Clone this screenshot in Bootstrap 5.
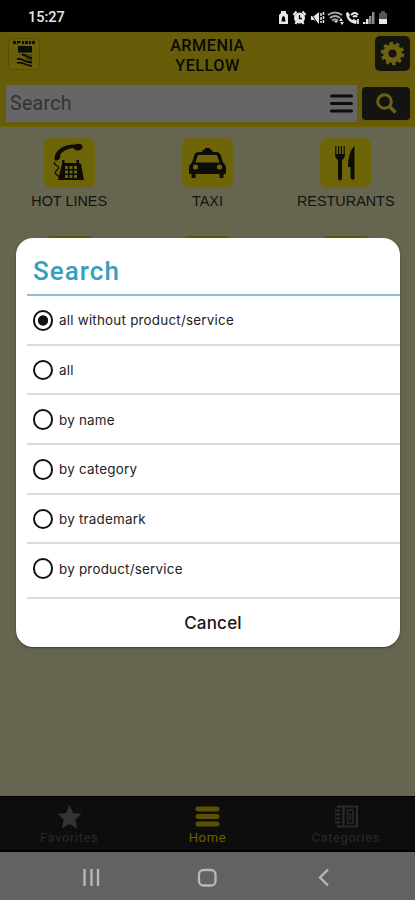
<!DOCTYPE html>
<html lang="en">
<head>
<meta charset="utf-8">
<meta name="viewport" content="width=device-width, initial-scale=1">
<title>Armenia Yellow</title>
<link href="https://cdn.jsdelivr.net/npm/bootstrap@5.3.0/dist/css/bootstrap.min.css" rel="stylesheet">
<style>
body{font-family:Roboto,"Liberation Sans",sans-serif;background:#666650;color:#0c0b04;height:900px;overflow:hidden}
svg{display:block;flex:none}
.screen{width:415px;height:900px}
.status{height:32px;background:#000;color:#e6e6e6;font-size:14.5px;font-weight:500;padding:3px 26px 0 28px}
.top-area{height:95px;background:#665c0a;padding:4px 5px 0 6px;border-bottom:2px solid #6b5f04}
.title-row{height:49px}
.app-title{font-size:16.3px;line-height:20px;font-weight:500;letter-spacing:.45px;color:#0b0a02}
.logo{width:32px;height:32px;border-radius:4px;background:#6a5f09;border:1px solid #574e0b;margin:2px 0 0 2px}
.gear-btn{width:35px;height:35px;border-radius:5px;background:#14140f;margin:0}
.search-field{width:351px;height:37px;background:#666;color:#333;font-size:19.5px;letter-spacing:.3px;padding:0 4px 0 4px}
.find-btn{width:48px;height:33px;border-radius:4px;background:#131311}
.tiles{padding-top:11px;height:109px}
.tile-icon{width:51px;height:50px;border-radius:7px;background:#6e6408}
.tile-label{font-family:"Liberation Sans",sans-serif;font-size:14.4px;line-height:18px;margin-top:4px;color:#13130c}
.cell{width:138.3px}
.peek{height:12px}
.peek span{width:51px;height:12px;border-radius:7px 7px 0 0;background:#5f550a}
.tabs{height:56px;background:#0d0d0d;border-top:1px solid #000;border-bottom:2px solid #000;font-size:13px;letter-spacing:.6px;color:#292929;line-height:16px;padding-top:8px}
.tabs .on{color:#6b6000}
.sysnav{height:48px;background:#626262}
.dialog-box{left:16px;top:238px;width:384px;height:409px;border-radius:17px;background:#fff;padding-left:11px;box-shadow:0 1px 2px #3b3c2b}
.dialog-title{height:58px;font-size:26px;font-weight:500;letter-spacing:1.05px;color:#35a0bd;padding:10px 0 0 6px;border-bottom:2px solid #8cc3d4}
.option{height:49.7px;border-bottom:2px solid #d9dcdc;padding:1px 0 0 5.5px;gap:6px;font-family:Inter,sans-serif;font-size:13.4px;letter-spacing:.23px;color:#222;cursor:pointer}
.option:last-of-type{height:54.5px;padding-bottom:5px}
.option input{appearance:none;width:20.5px;height:20.5px;border:2px solid #111;border-radius:50%;margin:0;flex:none}
.option input:checked{background:radial-gradient(circle,#111 0 4.8px,transparent 5.5px)}
.cancel{height:50px;font-family:Inter,sans-serif;font-size:17px;font-weight:500;color:#171717;width:362px;margin-left:5px;background:none;border:0;letter-spacing:.2px}
</style>
</head>
<body>
<div class="screen d-flex flex-column position-relative">
  <div class="status d-flex align-items-center justify-content-between">
    <span>15:27</span>
    <svg width="112" height="16" viewBox="0 0 112 16" fill="#e6e6e6" stroke="none">
      <path d="M2 5 4 3V1h5v2l2 2v9H2z"/><path d="M4.500 11.500h4l-.6-3.800a1.400 1.400 0 0 0-2.800 0z" fill="#000"/>
      <circle cx="22.500" cy="8" r="5.500"/><path d="m16.500 5 3-3.500M28.500 5l-3-3.500M18.500 14l1-2M26.500 14l-1-2" stroke="#e6e6e6" stroke-width="2"/><path d="M22.500 5v3.500H25" fill="none" stroke="#000" stroke-width="1.300"/>
      <path d="M34 6h3l5-4v12l-5-4h-3z"/><path d="m33 2 8 12" stroke="#000"/><path d="M44 3v10M46.500 2v12" stroke="#e6e6e6" stroke-width="1.500" stroke-dasharray="3 1"/>
      <g fill="none" stroke="#aaa" stroke-width="2"><path d="M51 5q7-5 14 0M53 8q5-4 10 0M55 10.500q3-2 6 0"/></g><path d="m57 11 2 2 2-2zM62 11l2-3 2 3zM63 12h4l-2 3z"/>
      <path d="M69 3c0 6 4 10 10 11l1-3-3-2-2 1-3-3 1-2-2-3z"/><path d="M74 5q4-4 7 0M76 7q2-2 4 0M81 9v5" fill="none" stroke="#e6e6e6" stroke-width="1.800"/>
      <path d="M86 12h2.500v2H86zM89 9h2.500v5H89z"/><path d="M92 6h2.500v8H92zM95 2h2.500v12H95z" fill="#888"/>
      <path d="M102 3h2V1h4v2h2v6h-8z" fill="#555"/><path d="M102 9h8v5h-8z"/>
    </svg>
  </div>

  <header class="top-area">
    <div class="title-row d-flex justify-content-between align-items-start">
      <div class="logo"><svg width="30" height="30" viewBox="0 0 30 30" fill="#0b0b07"><path d="M4 2h3v3H4zM8 2h4l-1 2H9v1H8zM13 2h2v3h-2zM16 2h3v3h-3zM20 2h2v3h-2zM23 2h3v3h-3zM9 7h14v6.500H9z"/><path d="M9 15.500h14v8C16 22 17 16.500 9 15.500z" fill="#4b430a"/><path d="M8 20c6-1 6 3 15 3.500M8 24c5-2 7 2 15 3M13 15.500c5 0 4 3 10 4" fill="none" stroke="#0b0b07" stroke-width="1.800"/></svg></div>
      <div class="app-title text-center">ARMENIA<br>YELLOW</div>
      <button class="gear-btn btn p-0 d-flex align-items-center justify-content-center border-0" aria-label="Settings"><svg width="25" height="25" viewBox="-12.500 -12.500 25 25"><circle r="6.800" fill="none" stroke="#6d6213" stroke-width="5.400"/><circle r="10" fill="none" stroke="#6d6213" stroke-width="3.500" stroke-dasharray="3.400 2.883"/></svg></button>
    </div>
    <div class="d-flex align-items-center justify-content-between">
      <div class="search-field d-flex align-items-center justify-content-between"><span>Search</span><svg width="23" height="20" viewBox="0 0 23 20"><path d="M1.500 2h20M1.500 9.500h20M1.500 17h20" stroke="#0b0b0b" stroke-width="3" stroke-linecap="round"/></svg></div>
      <button class="find-btn btn border-0 p-0 d-flex align-items-center justify-content-center" aria-label="Search"><svg width="22" height="22" viewBox="0 0 22 22" fill="none" stroke="#6d6213"><circle cx="9.500" cy="8.500" r="6.800" stroke-width="3"/><path d="m14 13 6.500 6.500" stroke-width="3.500"/></svg></button>
    </div>
  </header>

  <main class="flex-grow-1">
    <div class="tiles d-flex">
      <div class="cell d-flex flex-column align-items-center"><div class="tile-icon"><svg width="51" height="50" viewBox="0 0 51 50" fill="#0d0c06"><path d="M10.500 22C10 13 18 6.500 31 6.500c3-1.500 7-1 7.500 1.500.5 3-2 4.500-5 4.500-2 0-3-1-4-2.500-6 .5-11 3-13.500 7 1.500 3-2.500 7-5.500 5z"/><path d="M11 24c-3 4 6 3 3 7-3 3-4 4-1 6 1 1 3 3 5 1" fill="none" stroke="#0d0c06" stroke-width="1.300"/><path d="M18 22h2.500v3h12v-3H35v3l2 1 3 16H14l4-16z"/><path d="M21 28h3v3h-3zM25.500 28h3v3h-3zM30 28h3v3h-3zM21 32.500h3v3h-3zM25.500 32.500h3v3h-3zM30 32.500h3v3h-3zM21 37h3v3h-3zM25.500 37h3v3h-3zM30 37h3v3h-3z" fill="#6e6408"/></svg></div><div class="tile-label">HOT LINES</div></div>
      <div class="cell d-flex flex-column align-items-center"><div class="tile-icon"><svg width="51" height="50" viewBox="0 0 51 50" fill="#0d0c06"><path d="M20.500 14v-2l2.500-.5V10h5v1.500l2.500.5v2H34c3 0 4 1 5 4l2 6.500c2 2 3 3 3 6V36h-2.500v4h-4v-4h-24v4h-4v-4H7v-5.500c0-3 1-4 3-6l2-6.500c1-3 2-4 5-4z"/><path d="m16 17-2.500 7.500h24L35 17z" fill="#6e6408"/><circle cx="13.500" cy="29" r="2.600" fill="#6e6408"/><circle cx="37.500" cy="29" r="2.600" fill="#6e6408"/></svg></div><div class="tile-label">TAXI</div></div>
      <div class="cell d-flex flex-column align-items-center"><div class="tile-icon"><svg width="51" height="50" viewBox="0 0 51 50" fill="#0d0c06"><path d="M18 19h4v22q-2 3-4 0zM15 16h10q0 4-3 6h-4q-3-2-3-6z"/><path d="M15.800 8v9M18.600 8v9M21.400 8v9M24.200 8v9" stroke="#0d0c06" stroke-width="1.100"/><path d="M34.500 8v33q-2.500 2-4-1V29h-2.500c0-9 2.500-18 6.500-21z"/></svg></div><div class="tile-label">RESTURANTS</div></div>
    </div>
    <div class="peek d-flex"><div class="cell d-flex justify-content-center"><span></span></div><div class="cell d-flex justify-content-center"><span></span></div><div class="cell d-flex justify-content-center"><span></span></div></div>
  </main>

  <nav class="tabs d-flex">
    <div class="cell d-flex flex-column align-items-center"><svg width="25" height="25" viewBox="0 0 25 25" fill="#333"><path d="m12.500 0 3.600 8 8.400.8-6.200 5.800 2 9-7.800-4.600-7.800 4.600 2-9L.5 8.800 8.900 8z"/></svg>Favorites</div>
    <div class="cell on d-flex flex-column align-items-center"><svg width="25" height="25" viewBox="0 0 25 25"><path d="M3 4h19M3 11.500h19M3 19h19" stroke="#5d5100" stroke-width="5" stroke-linecap="round"/></svg>Home</div>
    <div class="cell d-flex flex-column align-items-center"><svg width="25" height="25" viewBox="0 0 25 25" fill="none" stroke="#2b2b2b" stroke-width="2.200"><path d="M5 3V1.500h19v20H5V20M10.500 2v19M2 5.500h5M2 9.500h5M2 13.500h5M2 17.500h5"/><path d="M14.500 5h5.500v13h-5.500zM17.200 8v7" stroke-width="1.500"/></svg>Categories</div>
  </nav>
  <div class="sysnav d-flex align-items-center">
    <svg width="415" height="48" viewBox="0 0 415 48" fill="none" stroke="#b8b8b8" stroke-width="2.300"><path d="M84.500 17v17M91.500 17v17M98 17v17"/><rect x="199" y="18" width="16.500" height="15.500" rx="4.500"/><path d="m328 17.500-8 8 8 8"/></svg>
  </div>

  <section class="dialog-box position-absolute" role="dialog" aria-label="Search">
    <div class="dialog-title d-flex align-items-center">Search</div>
    <label class="option d-flex align-items-center"><input type="radio" name="scope" checked>all without product/service</label>
    <label class="option d-flex align-items-center"><input type="radio" name="scope">all</label>
    <label class="option d-flex align-items-center"><input type="radio" name="scope">by name</label>
    <label class="option d-flex align-items-center"><input type="radio" name="scope">by category</label>
    <label class="option d-flex align-items-center"><input type="radio" name="scope">by trademark</label>
    <label class="option d-flex align-items-center"><input type="radio" name="scope">by product/service</label>
    <button class="cancel p-0">Cancel</button>
  </section>
</div>
<script src="https://cdn.jsdelivr.net/npm/bootstrap@5.3.0/dist/js/bootstrap.bundle.min.js"></script>
</body>
</html>
